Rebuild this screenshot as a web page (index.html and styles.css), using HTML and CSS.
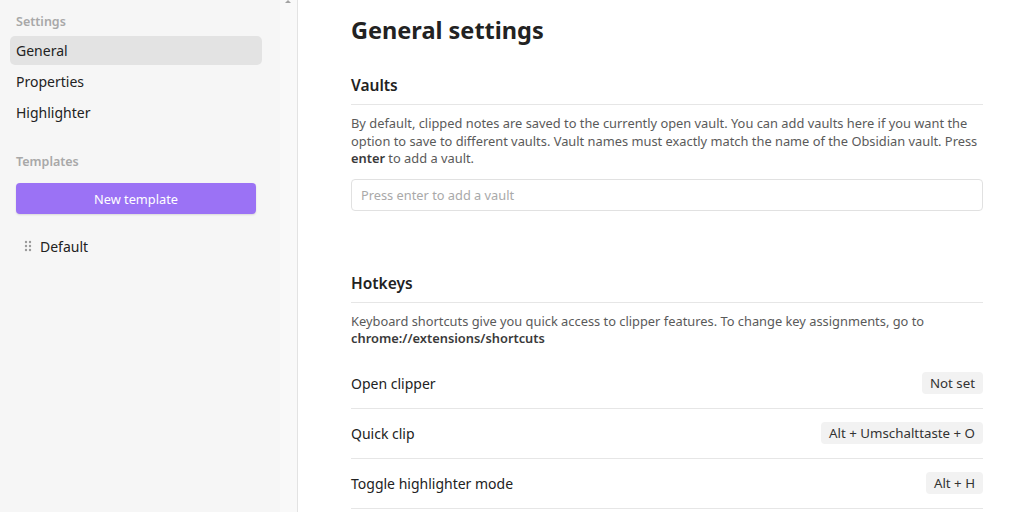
FILE: index.html
```html
<!DOCTYPE html>
<html>
<head>
<meta charset="utf-8">
<link rel="stylesheet" href="styles.css">
</head>
<body>
<div class="app">
  <aside class="sidebar">
    <div class="side-inner">
      <div class="side-label">Settings</div>
      <nav class="nav">
        <div class="nav-item active">General</div>
        <div class="nav-item">Properties</div>
        <div class="nav-item">Highlighter</div>
      </nav>
      <div class="side-label templates-label">Templates</div>
      <button class="new-btn">New template</button>
      <div class="template-item">
        <svg class="handle" width="8" height="12" viewBox="0 0 8 12"><g fill="#9a9a9a"><circle cx="2" cy="2" r="1.2"/><circle cx="6" cy="2" r="1.2"/><circle cx="2" cy="6" r="1.2"/><circle cx="6" cy="6" r="1.2"/><circle cx="2" cy="10" r="1.2"/><circle cx="6" cy="10" r="1.2"/></g></svg>
        <span>Default</span>
      </div>
    </div>
    <div class="scrollbar"><div class="scroll-arrow"></div></div>
  </aside>
  <main class="main">
    <div class="content">
      <h1 class="title">General settings</h1>
      <section class="section">
        <h2 class="section-title">Vaults</h2>
        <p class="desc">By default, clipped notes are saved to the currently open vault. You can add vaults here if you want the option to save to different vaults. Vault names must exactly match the name of the Obsidian vault. Press <strong>enter</strong> to add a vault.</p>
        <input class="vault-input" type="text" placeholder="Press enter to add a vault">
      </section>
      <section class="section hotkeys">
        <h2 class="section-title">Hotkeys</h2>
        <p class="desc">Keyboard shortcuts give you quick access to clipper features. To change key assignments, go to <strong>chrome://extensions/shortcuts</strong></p>
        <div class="hk-row"><span>Open clipper</span><span class="kbd">Not set</span></div>
        <div class="hk-row"><span>Quick clip</span><span class="kbd">Alt + Umschalttaste + O</span></div>
        <div class="hk-row"><span>Toggle highlighter mode</span><span class="kbd">Alt + H</span></div>
      </section>
    </div>
  </main>
</div>
</body>
</html>
```

FILE: styles.css
```css
* { box-sizing: border-box; }
html, body { margin: 0; padding: 0; height: 100%; overflow: hidden; }
body {
  font-family: "Noto Sans", "Open Sans", sans-serif;
  color: #222;
  background: #fff;
}
.app { display: flex; height: 512px; }
.sidebar {
  width: 298px;
  flex: none;
  display: flex;
  background: #f6f6f6;
  border-right: 1px solid #e3e3e3;
}
.side-inner { width: 280px; padding: 13px 18px 0 10px; }
.scrollbar { width: 17px; background: #f9f9f9; position: relative; }
.scroll-arrow {
  position: absolute; left: 5px; top: 0;
  width: 0; height: 0;
  border-left: 3px solid transparent; border-right: 3px solid transparent;
  border-bottom: 3px solid #a3a3a3;
}
.side-label {
  font-size: 12.5px;
  font-weight: 600;
  color: #a8a8a8;
  padding-left: 6px;
  height: 18px;
  line-height: 18px;
}
.nav { margin-top: 5px; display: flex; flex-direction: column; gap: 2px; }
.nav-item {
  height: 29px;
  line-height: 29px;
  padding-left: 6px;
  font-size: 14px;
  color: #222;
  border-radius: 5px;
}
.nav-item.active { background: #e3e3e3; }
.templates-label { margin-top: 26px; }
.new-btn {
  display: block;
  margin: 12px 0 0 6px;
  width: 240px;
  height: 31px;
  border: none;
  border-radius: 4px;
  background: #9b72f5;
  color: #fff;
  font-family: inherit;
  font-size: 12.8px;
  box-shadow: 0 1px 2px rgba(0,0,0,0.12);
}
.template-item {
  margin-top: 19px;
  padding-left: 14px;
  display: flex;
  align-items: center;
  gap: 8px;
  font-size: 14px;
  height: 26px;
}
.handle { flex: none; }
.main { flex: 1; min-width: 0; }
.content { width: 632px; margin-left: 53px; padding-top: 13px; }
.title {
  margin: 0;
  font-size: 23.5px;
  font-weight: 700;
  line-height: 34px;
  color: #222;
}
.section { margin-top: 26px; }
.section-title {
  margin: 0;
  font-size: 15.5px;
  font-weight: 600;
  line-height: 24px;
  padding-bottom: 7px;
  border-bottom: 1px solid #e6e6e6;
  color: #222;
}
.desc {
  margin: 10px 0 0;
  font-size: 12.85px;
  line-height: 17.5px;
  color: #5a5a5a;
}
.desc strong { font-weight: 600; color: #3a3a3a; }
.vault-input {
  display: block;
  width: 100%;
  height: 32px;
  margin-top: 11px;
  border: 1px solid #e1e1e1;
  border-radius: 4px;
  padding: 0 9px;
  font-family: inherit;
  font-size: 12.8px;
  color: #222;
  outline: none;
}
.vault-input::placeholder { color: #a9a9a9; }
.hotkeys { margin-top: 60px; }
.hk-row {
  display: flex;
  justify-content: space-between;
  align-items: center;
  height: 50px;
  border-bottom: 1px solid #e6e6e6;
  font-size: 14px;
  color: #222;
}
.hotkeys .desc { margin-bottom: 11px; }
.kbd {
  background: #f2f2f2;
  border-radius: 4px;
  padding: 0 8px;
  height: 22px;
  line-height: 22px;
  font-size: 13.3px;
  color: #333;
}
```
